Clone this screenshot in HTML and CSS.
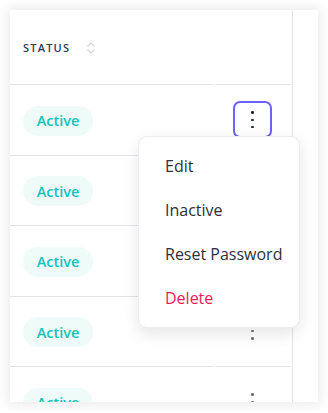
FILE: index.html
```html
<!DOCTYPE html>
<html>
<head>
<meta charset="utf-8">
<link rel="stylesheet" href="styles.css">
</head>
<body>
<div class="card">
  <div class="table">
    <div class="row head">
      <div class="cell status"><span class="th">STATUS</span>
        <svg class="sort" width="10" height="14" viewBox="0 0 10 14"><path d="M1.5 5.5 L5 2 L8.5 5.5 M1.5 8.5 L5 12 L8.5 8.5" fill="none" stroke="#d9d9e0" stroke-width="1.4"/></svg>
      </div>
      <div class="cell act"></div>
    </div>
    <div class="row">
      <div class="cell status"><span class="badge">Active</span></div>
      <div class="cell act"><button class="kebab open"><i></i><i></i><i></i></button></div>
    </div>
    <div class="row">
      <div class="cell status"><span class="badge">Active</span></div>
      <div class="cell act"><button class="kebab"><i></i><i></i><i></i></button></div>
    </div>
    <div class="row">
      <div class="cell status"><span class="badge">Active</span></div>
      <div class="cell act"><button class="kebab"><i></i><i></i><i></i></button></div>
    </div>
    <div class="row">
      <div class="cell status"><span class="badge">Active</span></div>
      <div class="cell act"><button class="kebab"><i></i><i></i><i></i></button></div>
    </div>
    <div class="row">
      <div class="cell status"><span class="badge">Active</span></div>
      <div class="cell act"><button class="kebab"><i></i><i></i><i></i></button></div>
    </div>
  </div>
  <div class="menu">
    <div class="item">Edit</div>
    <div class="item">Inactive</div>
    <div class="item">Reset Password</div>
    <div class="item danger">Delete</div>
  </div>
</div>
</body>
</html>
```
FILE: styles.css
```css
* { box-sizing: border-box; }
html, body { margin: 0; background: #fff; }
body { padding: 10px; font-family: "Open Sans", "Noto Sans", sans-serif; }
.card {
  position: relative;
  width: 308px;
  height: 392px;
  background: #fff;
  overflow: hidden;
  box-shadow: 0 0 12px 2px rgba(0,0,0,0.09);
}
.table {
  width: 283px;
  height: 100%;
  border-right: 1px solid #e4e4ea;
}
.row {
  display: flex;
  gap: 2px;
  height: 70.5px;
}
.row.head { height: 75px; }
.cell {
  border-bottom: 1px solid #e2e2e8;
  display: flex;
  align-items: center;
}
.status { width: 203px; padding-left: 13px; }
.act { width: 76px; padding-left: 18px; }
.th {
  font-size: 11px;
  font-weight: 600;
  letter-spacing: 1.2px;
  color: #363b4d;
}
.sort { margin-left: 16px; margin-top: 1px; }
.badge {
  display: inline-flex;
  align-items: center;
  justify-content: center;
  width: 70px;
  height: 30px;
  border-radius: 15px;
  background: #effbf9;
  color: #16c2b9;
  font-size: 14.5px;
  font-weight: 600;
  margin-top: 2px;
}
.kebab {
  width: 39px;
  height: 37px;
  border: 2px solid transparent;
  border-radius: 7px;
  background: transparent;
  display: flex;
  flex-direction: column;
  align-items: center;
  justify-content: center;
  gap: 5px;
  padding: 0;
}
.kebab i {
  display: block;
  width: 2.4px;
  height: 2.4px;
  border-radius: 50%;
  background: #6b7280;
}
.kebab.open { border-color: #6b62f7; }
.kebab.open i { background: #1f2433; }
.menu {
  position: absolute;
  left: 128px;
  top: 126px;
  width: 162px;
  padding: 7px 0;
  background: #fff;
  border: 1px solid #ececf1;
  border-radius: 9px;
  box-shadow: 0 6px 16px rgba(0,0,0,0.10);
}
.item {
  height: 44px;
  display: flex;
  align-items: center;
  padding-left: 26px;
  font-size: 16px;
  color: #2b2f3e;
}
.item.danger { color: #e81b5a; }
```
